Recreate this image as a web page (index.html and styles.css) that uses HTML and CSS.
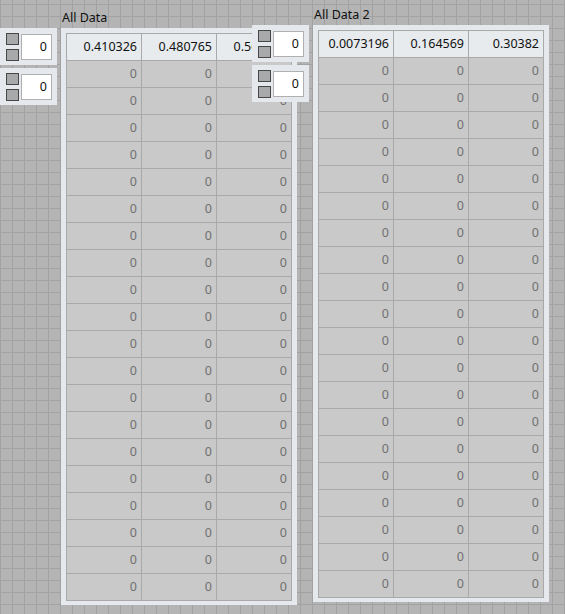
FILE: index.html
```html
<!DOCTYPE html>
<html>
<head>
<meta charset="utf-8">
<link rel="stylesheet" href="styles.css">
</head>
<body>
<div class="panel">
  <div class="arr arr1">
    <div class="index">
      <div class="idx"><div class="btns"><span class="btn"></span><span class="btn"></span></div><div class="field">0</div></div>
      <div class="idx"><div class="btns"><span class="btn"></span><span class="btn"></span></div><div class="field">0</div></div>
    </div>
    <div class="ctl">
      <div class="label">All Data</div>
      <div class="frame">
        <div class="table">
          <div class="cell head">0.410326</div><div class="cell head">0.480765</div><div class="cell head">0.562834</div>
          <div class="cell">0</div><div class="cell">0</div><div class="cell">0</div>
          <div class="cell">0</div><div class="cell">0</div><div class="cell">0</div>
          <div class="cell">0</div><div class="cell">0</div><div class="cell">0</div>
          <div class="cell">0</div><div class="cell">0</div><div class="cell">0</div>
          <div class="cell">0</div><div class="cell">0</div><div class="cell">0</div>
          <div class="cell">0</div><div class="cell">0</div><div class="cell">0</div>
          <div class="cell">0</div><div class="cell">0</div><div class="cell">0</div>
          <div class="cell">0</div><div class="cell">0</div><div class="cell">0</div>
          <div class="cell">0</div><div class="cell">0</div><div class="cell">0</div>
          <div class="cell">0</div><div class="cell">0</div><div class="cell">0</div>
          <div class="cell">0</div><div class="cell">0</div><div class="cell">0</div>
          <div class="cell">0</div><div class="cell">0</div><div class="cell">0</div>
          <div class="cell">0</div><div class="cell">0</div><div class="cell">0</div>
          <div class="cell">0</div><div class="cell">0</div><div class="cell">0</div>
          <div class="cell">0</div><div class="cell">0</div><div class="cell">0</div>
          <div class="cell">0</div><div class="cell">0</div><div class="cell">0</div>
          <div class="cell">0</div><div class="cell">0</div><div class="cell">0</div>
          <div class="cell">0</div><div class="cell">0</div><div class="cell">0</div>
          <div class="cell">0</div><div class="cell">0</div><div class="cell">0</div>
          <div class="cell">0</div><div class="cell">0</div><div class="cell">0</div>
        </div>
      </div>
    </div>
  </div>

  <div class="arr arr2">
    <div class="index">
      <div class="idx"><div class="btns"><span class="btn"></span><span class="btn"></span></div><div class="field">0</div></div>
      <div class="idx"><div class="btns"><span class="btn"></span><span class="btn"></span></div><div class="field">0</div></div>
    </div>
    <div class="ctl">
      <div class="label">All Data 2</div>
      <div class="frame">
        <div class="table">
          <div class="cell head">0.0073196</div><div class="cell head">0.164569</div><div class="cell head">0.30382</div>
          <div class="cell">0</div><div class="cell">0</div><div class="cell">0</div>
          <div class="cell">0</div><div class="cell">0</div><div class="cell">0</div>
          <div class="cell">0</div><div class="cell">0</div><div class="cell">0</div>
          <div class="cell">0</div><div class="cell">0</div><div class="cell">0</div>
          <div class="cell">0</div><div class="cell">0</div><div class="cell">0</div>
          <div class="cell">0</div><div class="cell">0</div><div class="cell">0</div>
          <div class="cell">0</div><div class="cell">0</div><div class="cell">0</div>
          <div class="cell">0</div><div class="cell">0</div><div class="cell">0</div>
          <div class="cell">0</div><div class="cell">0</div><div class="cell">0</div>
          <div class="cell">0</div><div class="cell">0</div><div class="cell">0</div>
          <div class="cell">0</div><div class="cell">0</div><div class="cell">0</div>
          <div class="cell">0</div><div class="cell">0</div><div class="cell">0</div>
          <div class="cell">0</div><div class="cell">0</div><div class="cell">0</div>
          <div class="cell">0</div><div class="cell">0</div><div class="cell">0</div>
          <div class="cell">0</div><div class="cell">0</div><div class="cell">0</div>
          <div class="cell">0</div><div class="cell">0</div><div class="cell">0</div>
          <div class="cell">0</div><div class="cell">0</div><div class="cell">0</div>
          <div class="cell">0</div><div class="cell">0</div><div class="cell">0</div>
          <div class="cell">0</div><div class="cell">0</div><div class="cell">0</div>
          <div class="cell">0</div><div class="cell">0</div><div class="cell">0</div>
        </div>
      </div>
    </div>
  </div>
</div>
</body>
</html>
```
FILE: styles.css
```css
html, body {
  margin: 0;
  padding: 0;
}
body {
  width: 565px;
  height: 614px;
  overflow: hidden;
  font-family: "Noto Sans", "Open Sans", sans-serif;
  font-size: 12.5px;
  color: #111;
}
.panel {
  position: relative;
  width: 565px;
  height: 614px;
  background-color: #b4b4b4;
  background-image:
    linear-gradient(to right, #a2a2a2 1px, transparent 1px),
    linear-gradient(to bottom, #a2a2a2 1px, transparent 1px);
  background-size: 12px 12px;
  background-position: 0 4px;
}
.arr {
  position: absolute;
  display: flex;
  align-items: flex-start;
  gap: 4px;
}
.arr1 { left: 0; top: 10px; }
.arr2 { left: 252px; top: 7px; }

.index {
  margin-top: 18px;
  display: flex;
  flex-direction: column;
  gap: 3px;
}
.idx {
  width: 57px;
  height: 37px;
  background: #e5e9ed;
  display: flex;
  box-sizing: border-box;
  padding: 5px 5px 0 6px;
  gap: 2px;
}
.btns {
  display: flex;
  flex-direction: column;
  gap: 4px;
}
.btn {
  display: block;
  width: 13px;
  height: 12px;
  box-sizing: border-box;
  background: #a7a9ab;
  border: 1px solid #474747;
}
.field {
  margin-top: 1px;
  width: 31px;
  height: 26px;
  box-sizing: border-box;
  background: #fff;
  border: 1px solid #b0b0b0;
  text-align: right;
  padding-right: 4px;
  line-height: 24px;
  color: #111;
}

.ctl {
  display: flex;
  flex-direction: column;
}
.label {
  height: 18px;
  line-height: 16px;
  padding-left: 1px;
  white-space: nowrap;
}
.frame {
  width: 236px;
  box-sizing: border-box;
  padding: 5px 5px 4px 5px;
  background: #e5e9ed;
}
.table {
  display: grid;
  grid-template-columns: repeat(3, 74px);
  grid-auto-rows: 26px;
  gap: 1px;
  border: 1px solid #a9a9a9;
  background: #a9a9a9;
  width: max-content;
}
.cell {
  background: #c9c9c9;
  color: #707070;
  text-align: right;
  padding-right: 4px;
  line-height: 26px;
  white-space: nowrap;
  overflow: hidden;
}
.cell.head {
  background: #e7ebee;
  color: #111;
}
```
